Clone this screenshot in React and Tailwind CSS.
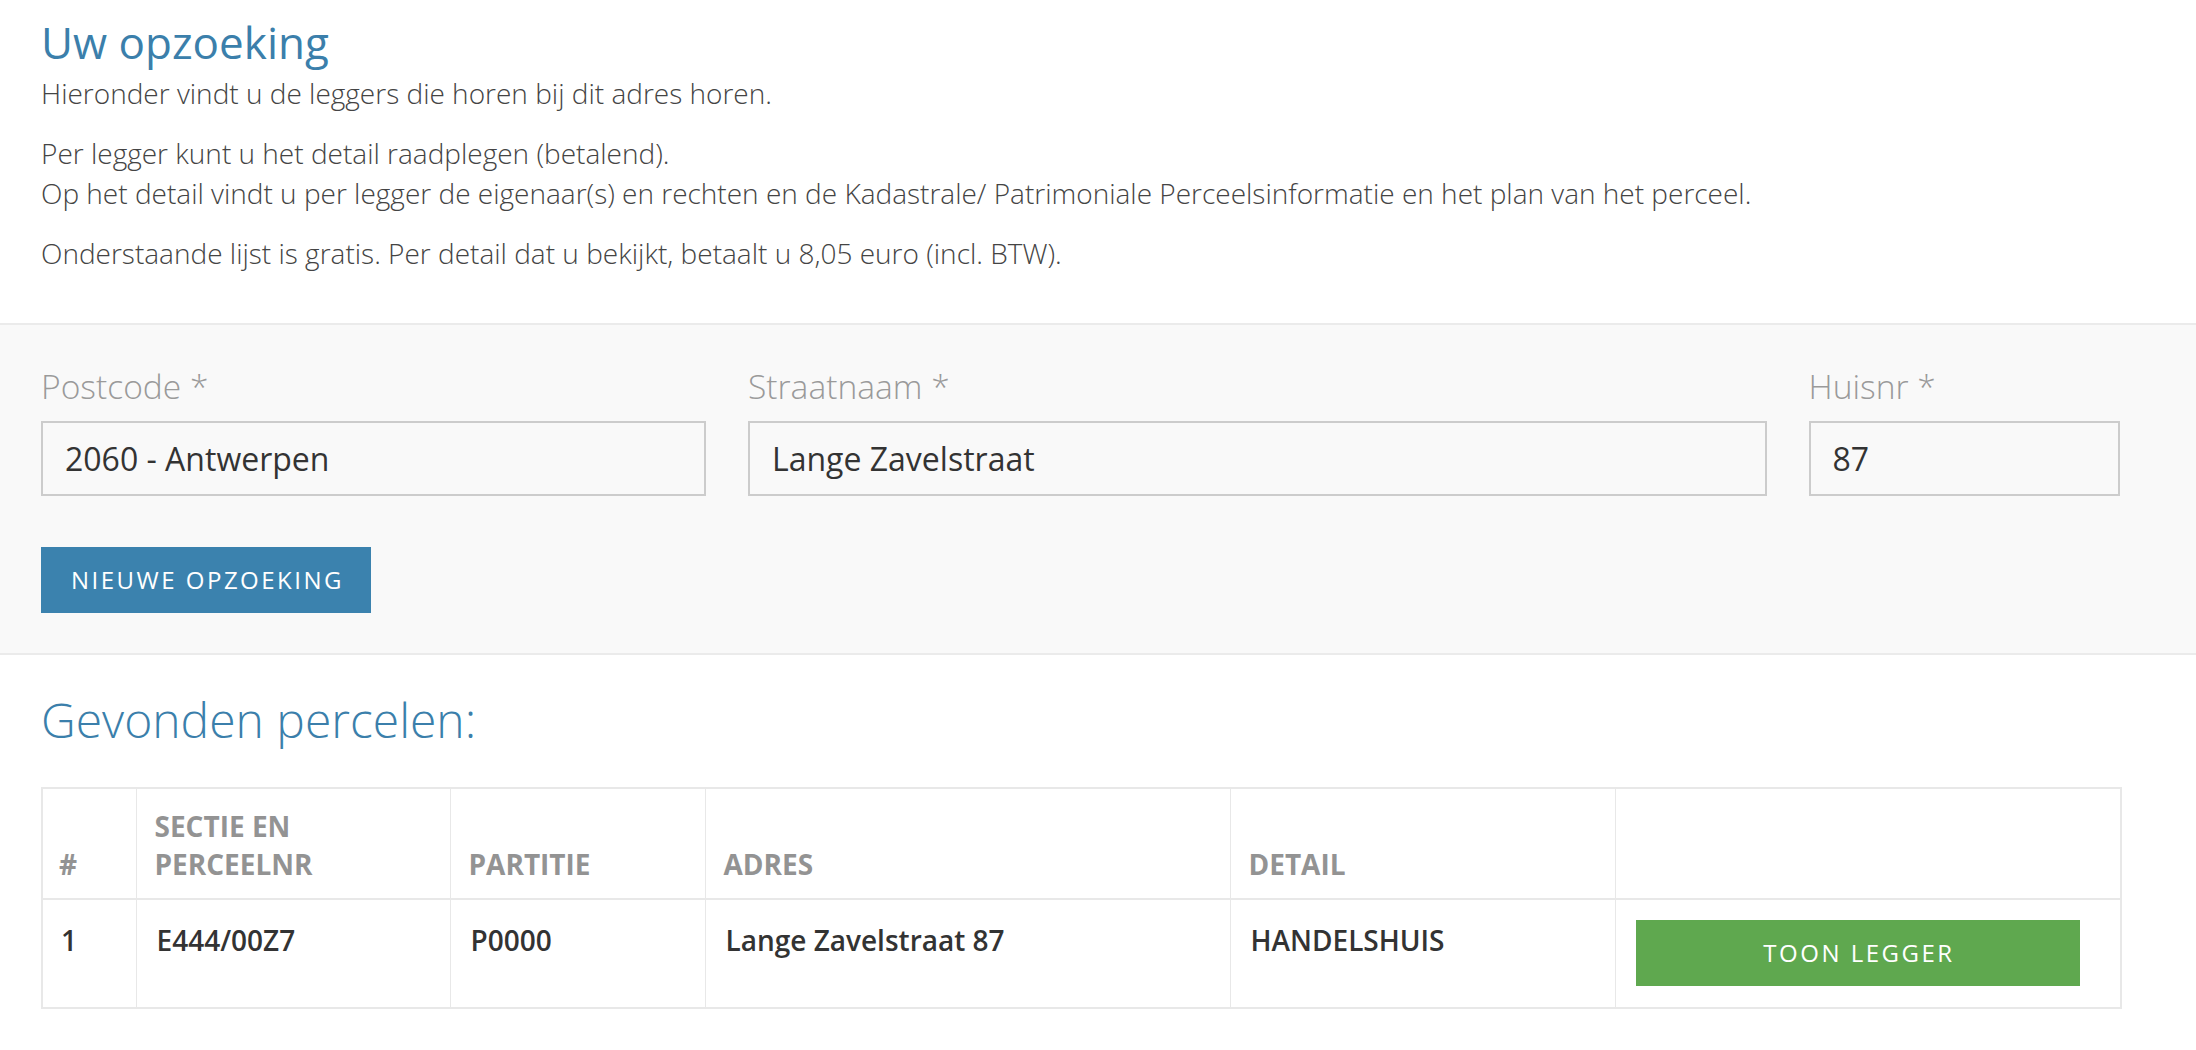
import React from "react";

const rows = [
  { nr: "1", perceel: "E444/00Z7", partitie: "P0000", adres: "Lange Zavelstraat 87", detail: "HANDELSHUIS" },
];

function Field({ label, value, span }) {
  return (
    <div className={span}>
      <label className="block text-[33.6px] leading-[36px] font-light text-[#9a9a9a] mb-[17px]">{label}</label>
      <div className="h-[75px] border-2 border-[#cccccc] bg-[#f9f9f9] px-[22px] flex items-center text-[32px] text-[#333]">
        {value}
      </div>
    </div>
  );
}

export default function App() {
  return (
    <div className="min-h-screen bg-white font-['Open_Sans',sans-serif] text-[#333]">
      {/* Intro */}
      <div className="ml-[41px] w-[2079px] pt-[18px]">
        <h1 className="text-[44px] leading-[48px] text-[#3b7fab] mb-[7px]">Uw opzoeking</h1>
        <div className="text-[28px] leading-[40px] font-light text-[#444] space-y-[20px]">
          <p>Hieronder vindt u de leggers die horen bij dit adres horen.</p>
          <p>
            Per legger kunt u het detail raadplegen (betalend).
            <br />
            Op het detail vindt u per legger de eigenaar(s) en rechten en de Kadastrale/ Patrimoniale Perceelsinformatie en het plan van het perceel.
          </p>
          <p>Onderstaande lijst is gratis. Per detail dat u bekijkt, betaalt u 8,05 euro (incl. BTW).</p>
        </div>
      </div>

      {/* Search form */}
      <div className="mt-[50px] bg-[#f9f9f9] border-y-2 border-[#ebebeb]">
        <div className="ml-[41px] w-[2079px] pt-[43px] pb-[40px]">
          <div className="grid grid-cols-12 gap-x-[42px]">
            <Field span="col-span-4" label="Postcode *" value="2060 - Antwerpen" />
            <Field span="col-span-6" label="Straatnaam *" value="Lange Zavelstraat" />
            <Field span="col-span-2" label="Huisnr *" value="87" />
          </div>
          <button className="mt-[51px] h-[66px] w-[330px] pl-[3px] bg-[#3b82ae] text-white text-[24px] tracking-[2.5px] uppercase">
            Nieuwe opzoeking
          </button>
        </div>
      </div>

      {/* Results */}
      <div className="ml-[41px] w-[2079px] pt-[39px]">
        <h2 className="text-[48px] leading-[52px] font-light text-[#3b7fab]">Gevonden percelen:</h2>
        <table className="mt-[41px] w-[2079px] table-fixed border-collapse border-2 border-[#e8e8e8]">
          <colgroup>
            <col className="w-[94px]" />
            <col className="w-[314px]" />
            <col className="w-[255px]" />
            <col className="w-[525px]" />
            <col className="w-[385px]" />
            <col className="w-[506px]" />
          </colgroup>
          <thead>
            <tr className="border-b-2 border-[#e8e8e8] text-[28px] leading-[38px] font-bold text-[#939393] uppercase">
              <th className="text-left align-bottom pl-[16px] pr-[18px] pt-[18px] pb-[15px] border-r border-[#e8e8e8]">#</th>
              <th className="text-left align-bottom px-[18px] pt-[18px] pb-[15px] border-r border-[#e8e8e8]">Sectie en<br />perceelnr</th>
              <th className="text-left align-bottom px-[18px] pt-[18px] pb-[15px] border-r border-[#e8e8e8]">Partitie</th>
              <th className="text-left align-bottom px-[18px] pt-[18px] pb-[15px] border-r border-[#e8e8e8]">Adres</th>
              <th className="text-left align-bottom px-[18px] pt-[18px] pb-[15px] border-r border-[#e8e8e8]">Detail</th>
              <th className="border-r border-[#e8e8e8]"></th>
            </tr>
          </thead>
          <tbody>
            {rows.map((r) => (
              <tr key={r.nr} className="text-[28px] leading-[40px] font-semibold text-[#333]">
                <td className="align-top px-[18px] pt-[20px] border-r border-[#e8e8e8]">{r.nr}</td>
                <td className="align-top px-[20px] pt-[20px] border-r border-[#e8e8e8]">{r.perceel}</td>
                <td className="align-top px-[20px] pt-[20px] border-r border-[#e8e8e8]">{r.partitie}</td>
                <td className="align-top px-[20px] pt-[20px] border-r border-[#e8e8e8]">{r.adres}</td>
                <td className="align-top px-[20px] pt-[20px] border-r border-[#e8e8e8]">{r.detail}</td>
                <td className="align-top pl-[20px] pt-[20px] pb-[21px]">
                  <button className="w-[444px] h-[66px] pl-[3px] bg-[#5fa84f] text-white font-normal text-[24px] tracking-[2.5px] uppercase">
                    Toon legger
                  </button>
                </td>
              </tr>
            ))}
          </tbody>
        </table>
      </div>
    </div>
  );
}
